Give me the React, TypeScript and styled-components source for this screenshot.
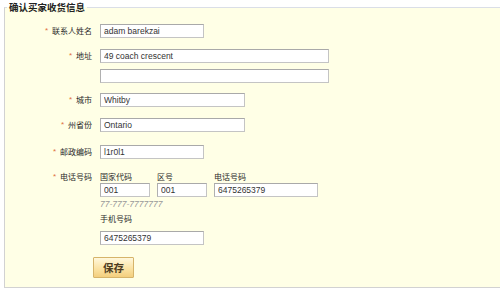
import React from "react";
import { createGlobalStyle, styled } from "styled-components";

const GlobalStyle = createGlobalStyle`
  html, body {
    margin: 0;
    padding: 0;
    background: #ffffff;
    overflow: hidden;
  }
  body {
    font-family: "Liberation Sans", Arial, "Noto Sans CJK SC", sans-serif;
    color: #333333;
  }
`;

const LABEL_WIDTH = 87;

const Page = styled.div`
  width: 500px;
  height: 289px;
  overflow: hidden;
`;

const Panel = styled.fieldset`
  margin: 0 0 0 4px;
  padding: 0;
  width: 600px;
  box-sizing: border-box;
  background: #ffffe6;
  border: 1px solid #d2d2d2;
  border-top-color: #dadee7;
`;

const Legend = styled.legend`
  margin-left: 2px;
  padding: 0 2px;
  font-family: "Noto Sans CJK SC", sans-serif;
  font-size: 9.5px;
  font-weight: 700;
  line-height: 14px;
  color: #222222;
`;

const Form = styled.div`
  display: flex;
  flex-direction: column;
  padding: 10px 0 9px;
`;

const Row = styled.div<{ $mt?: number; $top?: boolean }>`
  display: flex;
  align-items: ${({ $top }) => ($top ? "flex-start" : "center")};
  gap: 8px;
  margin-top: ${({ $mt }) => $mt ?? 0}px;
`;

const Label = styled.div<{ $lh?: number }>`
  width: ${LABEL_WIDTH}px;
  flex: none;
  display: flex;
  justify-content: flex-end;
  align-items: center;
  gap: 4px;
  font-family: "Noto Sans CJK SC", sans-serif;
  font-size: 8px;
  line-height: ${({ $lh }) => $lh ?? 14}px;
  color: #2a2a2a;
`;

const Star = styled.span`
  font-family: "Liberation Sans", sans-serif;
  font-size: 8px;
  color: #e0703c;
`;

const Field = styled.input<{ $w: number; $mt?: number }>`
  box-sizing: border-box;
  width: ${({ $w }) => $w}px;
  height: 14px;
  margin: ${({ $mt }) => $mt ?? 0}px 0 0;
  padding: 0 3px;
  border: 1px solid #c4c4c4;
  border-top-color: #a9a9a9;
  border-left-color: #b0b0b0;
  background: #ffffff;
  font-family: "Liberation Sans", Arial, sans-serif;
  font-size: 8.5px;
  color: #333333;
  outline: none;
`;

const Stack = styled.div<{ $gap?: number }>`
  display: flex;
  flex-direction: column;
  gap: ${({ $gap }) => $gap ?? 0}px;
`;

const PhoneGrid = styled.div`
  display: grid;
  grid-template-columns: 50px 50px 104px;
  column-gap: 7px;
`;

const SubLabel = styled.div<{ $mt?: number }>`
  font-family: "Noto Sans CJK SC", sans-serif;
  font-size: 8px;
  line-height: 12px;
  margin-top: ${({ $mt }) => $mt ?? 0}px;
  color: #2a2a2a;
`;

const Hint = styled.div`
  margin-top: 2px;
  font-size: 8.5px;
  line-height: 10px;
  font-style: italic;
  color: #9a9a9a;
`;

const ButtonRow = styled.div`
  margin-top: 12px;
  padding-left: ${LABEL_WIDTH + 1}px;
`;

const SaveButton = styled.button`
  box-sizing: border-box;
  width: 41px;
  height: 21px;
  margin: 0;
  padding: 0;
  border: 1px solid #d6b46a;
  border-radius: 1px;
  background: linear-gradient(#fff8dc, #fbe3a4 55%, #f3cf7e);
  font-family: "Noto Sans CJK SC", sans-serif;
  font-size: 10.5px;
  font-weight: 700;
  color: #4d3b1f;
  cursor: pointer;
`;

type Item = { label: string; width: number; value: string; mt: number };

const simple: Item[] = [
  { label: "城市", width: 145, value: "Whitby", mt: 10 },
  { label: "州省份", width: 145, value: "Ontario", mt: 11 },
  { label: "邮政编码", width: 104, value: "l1r0l1", mt: 13 },
];

const Req = ({ text, lh }: { text: string; lh?: number }) => (
  <Label $lh={lh}>
    <Star>*</Star>
    {text}
  </Label>
);

export default function App() {
  return (
    <Page>
      <GlobalStyle />
      <Panel>
        <Legend>确认买家收货信息</Legend>
        <Form>
          <Row>
            <Req text="联系人姓名" />
            <Field $w={104} defaultValue="adam barekzai" />
          </Row>

          <Row $mt={11} $top>
            <Req text="地址" />
            <Stack $gap={6}>
              <Field $w={229} defaultValue="49 coach crescent" />
              <Field $w={229} defaultValue="" />
            </Stack>
          </Row>

          {simple.map((it) => (
            <Row key={it.label} $mt={it.mt}>
              <Req text={it.label} />
              <Field $w={it.width} defaultValue={it.value} />
            </Row>
          ))}

          <Row $mt={12} $top>
            <Req text="电话号码" lh={12} />
            <Stack>
              <PhoneGrid>
                <SubLabel>国家代码</SubLabel>
                <SubLabel>区号</SubLabel>
                <SubLabel>电话号码</SubLabel>
                <Field $w={50} defaultValue="001" />
                <Field $w={50} defaultValue="001" />
                <Field $w={104} defaultValue="6475265379" />
              </PhoneGrid>
              <Hint>77-777-7777777</Hint>
              <SubLabel $mt={4}>手机号码</SubLabel>
              <Field $w={104} $mt={6} defaultValue="6475265379" />
            </Stack>
          </Row>

          <ButtonRow>
            <SaveButton type="button">保存</SaveButton>
          </ButtonRow>
        </Form>
      </Panel>
    </Page>
  );
}
